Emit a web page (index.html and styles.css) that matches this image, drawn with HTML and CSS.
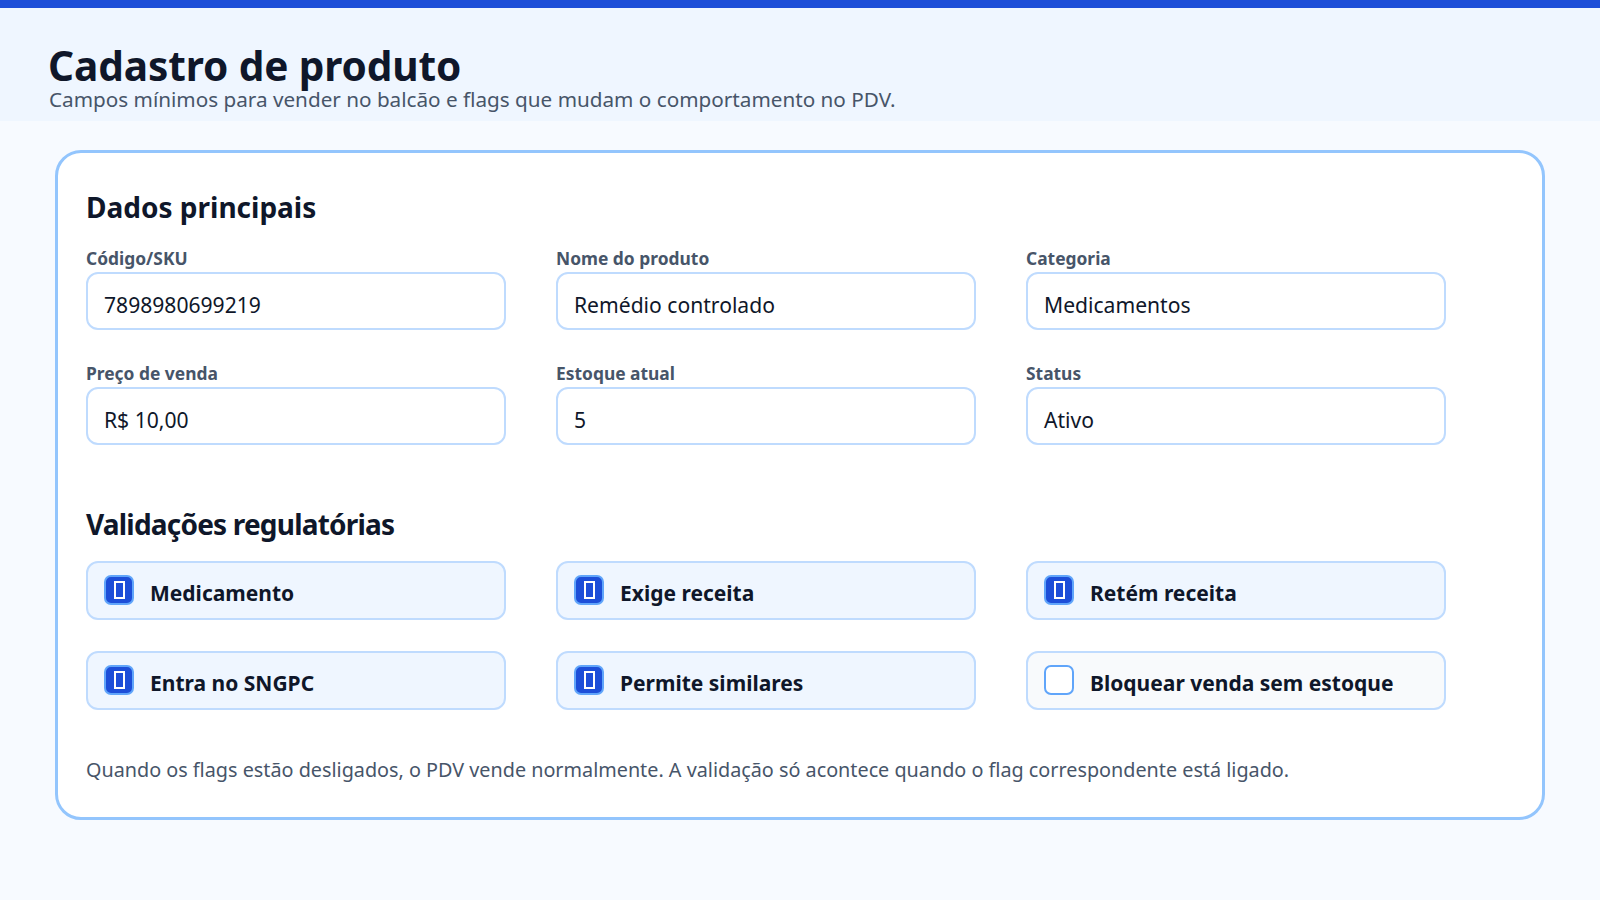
FILE: index.html
```html
<!DOCTYPE html>
<html lang="pt-BR">
<head>
<meta charset="utf-8">
<title>Cadastro de produto</title>
<link rel="stylesheet" href="styles.css">
</head>
<body>
<div class="topbar"></div>
<header class="page-header">
  <h1 class="title">Cadastro de produto</h1>
  <p class="subtitle">Campos mínimos para vender no balcão e flags que mudam o comportamento no PDV.</p>
</header>
<main class="main">
  <section class="card">
    <h2 class="section-title">Dados principais</h2>
    <div class="grid fields">
      <div class="field">
        <label class="label">Código/SKU</label>
        <div class="input">7898980699219</div>
      </div>
      <div class="field">
        <label class="label">Nome do produto</label>
        <div class="input">Remédio controlado</div>
      </div>
      <div class="field">
        <label class="label">Categoria</label>
        <div class="input">Medicamentos</div>
      </div>
      <div class="field">
        <label class="label">Preço de venda</label>
        <div class="input">R$ 10,00</div>
      </div>
      <div class="field">
        <label class="label">Estoque atual</label>
        <div class="input">5</div>
      </div>
      <div class="field">
        <label class="label">Status</label>
        <div class="input">Ativo</div>
      </div>
    </div>

    <h2 class="section-title second">Validações regulatórias</h2>
    <div class="grid flags">
      <div class="flag on"><span class="box"><span class="tofu"></span></span><span class="flag-text">Medicamento</span></div>
      <div class="flag on"><span class="box"><span class="tofu"></span></span><span class="flag-text">Exige receita</span></div>
      <div class="flag on"><span class="box"><span class="tofu"></span></span><span class="flag-text">Retém receita</span></div>
      <div class="flag on"><span class="box"><span class="tofu"></span></span><span class="flag-text">Entra no SNGPC</span></div>
      <div class="flag on"><span class="box"><span class="tofu"></span></span><span class="flag-text">Permite similares</span></div>
      <div class="flag off"><span class="box"></span><span class="flag-text">Bloquear venda sem estoque</span></div>
    </div>

    <p class="note">Quando os flags estão desligados, o PDV vende normalmente. A validação só acontece quando o flag correspondente está ligado.</p>
  </section>
</main>
</body>
</html>
```
FILE: styles.css
```css
* { box-sizing: border-box; }
html, body { margin: 0; padding: 0; }
body {
  font-family: "Noto Sans", "Open Sans", "DejaVu Sans", sans-serif;
  background: #f7faff;
  color: #0f172a;
  min-height: 900px;
}
.topbar { height: 8px; background: #1d4ed8; }
.page-header {
  background: #eff6ff;
  height: 113px;
  padding: 37px 0 0 48px;
}
.title {
  margin: 0;
  font-size: 40.6px;
  line-height: 42px;
  font-weight: 700;
  color: #0f172a;
  letter-spacing: -0.1px;
}
.subtitle {
  margin: 1px 0 0 1px;
  font-size: 20.7px;
  line-height: 22px;
  color: #475569;
}
.main { padding: 29px 55px 0 55px; }
.card {
  background: #ffffff;
  border: 3px solid #93c5fd;
  border-radius: 26px;
  height: 670px;
  padding: 37px 28px 0 28px;
}
.section-title {
  margin: 0;
  font-size: 28px;
  line-height: 34px;
  font-weight: 700;
  color: #0f172a;
}
.section-title.second { margin-top: 62px; letter-spacing: -0.8px; }
.grid {
  display: grid;
  grid-template-columns: repeat(3, 420px);
  column-gap: 50px;
}
.fields { margin-top: 24px; row-gap: 33px; }
.field { display: flex; flex-direction: column; gap: 4px; }
.label {
  font-size: 17.4px;
  line-height: 20px;
  font-weight: 700;
  color: #475569;
}
.input {
  height: 58px;
  border: 2px solid #bfdbfe;
  border-radius: 12px;
  background: #ffffff;
  padding: 7px 16px 0 16px;
  display: flex;
  align-items: center;
  font-size: 21.1px;
  color: #0f172a;
}
.flags { margin-top: 20px; row-gap: 31px; }
.flag {
  height: 59px;
  border: 2px solid #bfdbfe;
  border-radius: 12px;
  background: #eff6ff;
  display: flex;
  align-items: center;
  padding: 0 16px;
  gap: 16px;
}
.flag.off { background: #f8fafc; }
.box {
  width: 30px;
  height: 30px;
  border-radius: 7px;
  border: 2px solid #60a5fa;
  background: #1d4ed8;
  display: flex;
  align-items: center;
  justify-content: center;
  flex: none;
  margin-top: -2px;
}
.flag.off .box { background: #ffffff; }
.tofu {
  width: 11px;
  height: 18px;
  border: 2px solid #ffffff;
}
.flag-text {
  font-size: 21px;
  font-weight: 700;
  color: #0f172a;
  padding-top: 4px;
}
.note {
  margin: 48px 0 0 0;
  font-size: 19.8px;
  line-height: 24px;
  color: #475569;
}
```
